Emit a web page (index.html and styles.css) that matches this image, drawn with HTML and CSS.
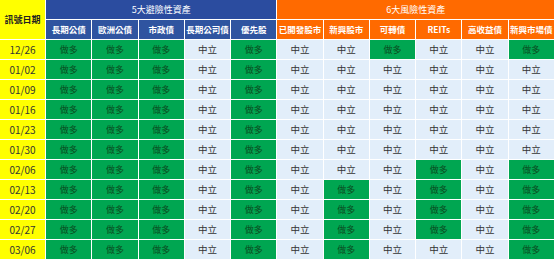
FILE: index.html
```html
<!DOCTYPE html>
<html lang="zh-Hant">
<head>
<meta charset="utf-8">
<link rel="stylesheet" href="styles.css">
</head>
<body>
<div class="grid">
  <div class="c date-head">訊號日期</div>
  <div class="c grp blue">5大避險性資產</div>
  <div class="c grp orange">6大風險性資產</div>
  <div class="c sub blue2">長期公債</div>
  <div class="c sub blue2">歐洲公債</div>
  <div class="c sub blue2">市政債</div>
  <div class="c sub blue2">長期公司債</div>
  <div class="c sub blue2 edge">優先股</div>
  <div class="c sub orange">已開發股市</div>
  <div class="c sub orange">新興股市</div>
  <div class="c sub orange">可轉債</div>
  <div class="c sub orange">REITs</div>
  <div class="c sub orange">高收益債</div>
  <div class="c sub orange">新興市場債</div>

  <div class="c date">12/26</div>
  <div class="c long">做多</div><div class="c long">做多</div><div class="c long">做多</div><div class="c neu">中立</div><div class="c long">做多</div>
  <div class="c neu">中立</div><div class="c neu">中立</div><div class="c long">做多</div><div class="c neu">中立</div><div class="c neu">中立</div><div class="c long">做多</div>

  <div class="c date">01/02</div>
  <div class="c long">做多</div><div class="c long">做多</div><div class="c long">做多</div><div class="c neu">中立</div><div class="c long">做多</div>
  <div class="c neu">中立</div><div class="c neu">中立</div><div class="c neu">中立</div><div class="c neu">中立</div><div class="c neu">中立</div><div class="c neu">中立</div>

  <div class="c date">01/09</div>
  <div class="c long">做多</div><div class="c long">做多</div><div class="c long">做多</div><div class="c neu">中立</div><div class="c long">做多</div>
  <div class="c neu">中立</div><div class="c neu">中立</div><div class="c neu">中立</div><div class="c neu">中立</div><div class="c neu">中立</div><div class="c neu">中立</div>

  <div class="c date">01/16</div>
  <div class="c long">做多</div><div class="c long">做多</div><div class="c long">做多</div><div class="c neu">中立</div><div class="c long">做多</div>
  <div class="c neu">中立</div><div class="c neu">中立</div><div class="c neu">中立</div><div class="c neu">中立</div><div class="c neu">中立</div><div class="c neu">中立</div>

  <div class="c date">01/23</div>
  <div class="c long">做多</div><div class="c long">做多</div><div class="c long">做多</div><div class="c neu">中立</div><div class="c long">做多</div>
  <div class="c neu">中立</div><div class="c neu">中立</div><div class="c neu">中立</div><div class="c neu">中立</div><div class="c neu">中立</div><div class="c neu">中立</div>

  <div class="c date">01/30</div>
  <div class="c long">做多</div><div class="c long">做多</div><div class="c long">做多</div><div class="c neu">中立</div><div class="c long">做多</div>
  <div class="c neu">中立</div><div class="c neu">中立</div><div class="c neu">中立</div><div class="c neu">中立</div><div class="c neu">中立</div><div class="c neu">中立</div>

  <div class="c date">02/06</div>
  <div class="c long">做多</div><div class="c long">做多</div><div class="c long">做多</div><div class="c neu">中立</div><div class="c long">做多</div>
  <div class="c neu">中立</div><div class="c neu">中立</div><div class="c neu">中立</div><div class="c long">做多</div><div class="c neu">中立</div><div class="c long">做多</div>

  <div class="c date">02/13</div>
  <div class="c long">做多</div><div class="c long">做多</div><div class="c long">做多</div><div class="c neu">中立</div><div class="c long">做多</div>
  <div class="c neu">中立</div><div class="c long">做多</div><div class="c neu">中立</div><div class="c long">做多</div><div class="c neu">中立</div><div class="c long">做多</div>

  <div class="c date">02/20</div>
  <div class="c long">做多</div><div class="c long">做多</div><div class="c long">做多</div><div class="c neu">中立</div><div class="c long">做多</div>
  <div class="c neu">中立</div><div class="c long">做多</div><div class="c neu">中立</div><div class="c long">做多</div><div class="c neu">中立</div><div class="c long">做多</div>

  <div class="c date">02/27</div>
  <div class="c long">做多</div><div class="c long">做多</div><div class="c long">做多</div><div class="c neu">中立</div><div class="c long">做多</div>
  <div class="c neu">中立</div><div class="c long">做多</div><div class="c neu">中立</div><div class="c long">做多</div><div class="c neu">中立</div><div class="c long">做多</div>

  <div class="c date">03/06</div>
  <div class="c long">做多</div><div class="c long">做多</div><div class="c long">做多</div><div class="c neu">中立</div><div class="c long">做多</div>
  <div class="c neu">中立</div><div class="c long">做多</div><div class="c neu">中立</div><div class="c neu">中立</div><div class="c neu">中立</div><div class="c long">做多</div>
</div>
</body>
</html>
```
FILE: styles.css
```css
html, body { margin: 0; padding: 0; background: #fff; }
.grid {
  width: 554px;
  height: 259px;
  display: grid;
  grid-template-columns: 45px repeat(11, 1fr);
  grid-template-rows: repeat(13, 1fr);
  gap: 1px;
  background: #fff;
  font-family: "Noto Sans CJK TC", "Noto Sans", sans-serif;
}
.c {
  display: flex;
  align-items: center;
  justify-content: center;
  font-size: 9px;
  line-height: 1;
  white-space: nowrap;
  overflow: hidden;
}
.date-head {
  grid-row: 1 / span 2;
  background: #ffff00;
  color: #222;
  font-weight: 700;
  font-size: 9px;
}
.grp { grid-column: span 5; color: #fff; }
.grp.orange { grid-column: span 6; }
.blue { background: #2b4c9f; }
.blue2 { background: #2f54a0; color: #fff; }
.orange { background: #ff6a00; color: #fff; }
.sub { font-size: 8.5px; font-weight: 700; }
.date { background: #ffff00; color: #333; font-size: 10px; }
.long { background: #00a651; color: #0a4f22; }
.neu { background: #e2eefa; color: #333; font-size: 9.5px; }
```
